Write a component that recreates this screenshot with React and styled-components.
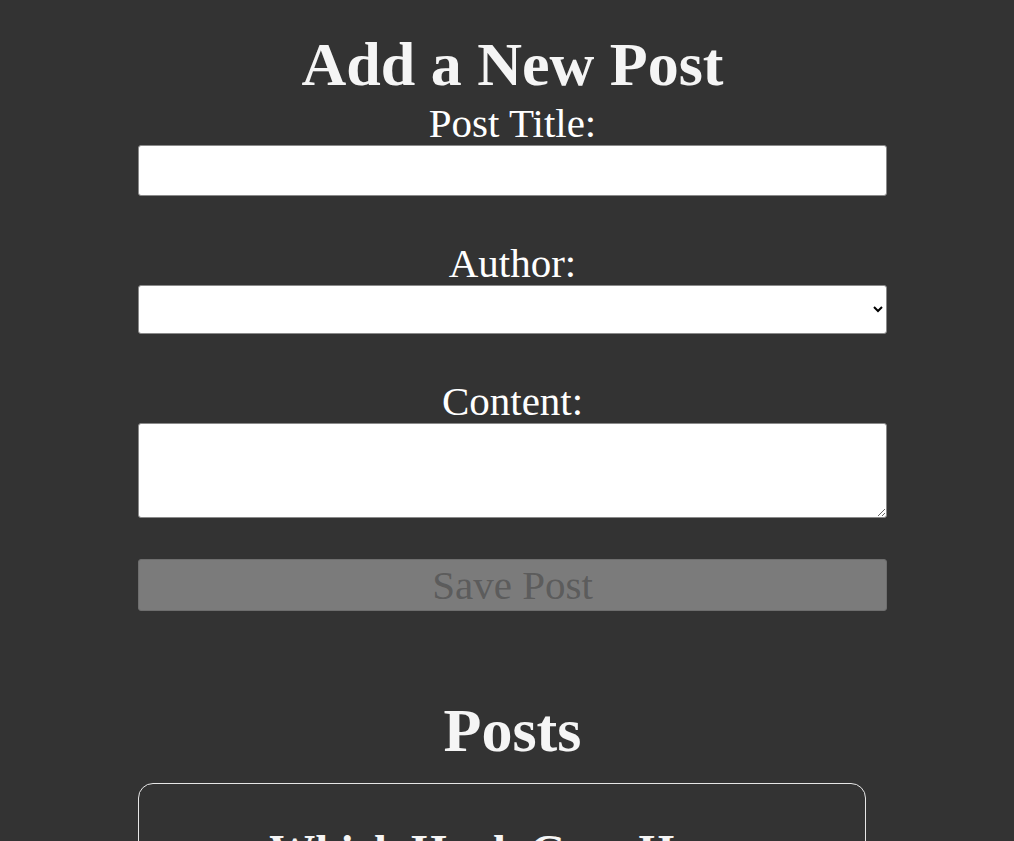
import React from "react";
import styled, { createGlobalStyle } from "styled-components";

const GlobalStyle = createGlobalStyle`
  html, body { margin: 0; padding: 0; background: #333333; }
  body {
    font-family: "Liberation Serif", "Times New Roman", serif;
    color: #f5f5f5;
  }
  * { box-sizing: border-box; }
`;

const Page = styled.main`
  display: flex;
  flex-direction: column;
  padding: 33px 127px 0 138px;
  min-height: 841px;
`;

const Section = styled.section`
  display: flex;
  flex-direction: column;
  align-items: ${(p) => (p.$start ? "flex-start" : "stretch")};
  margin-top: ${(p) => p.$mt || 0}px;
`;

const Heading = styled.h2`
  margin: 0;
  font-size: 62px;
  line-height: 62px;
  font-weight: 700;
  text-align: center;
  color: #f5f5f5;
  align-self: stretch;
`;

const Form = styled.form`
  display: flex;
  flex-direction: column;
  gap: 47px;
  margin-top: 8px;
`;

const Field = styled.div`
  display: flex;
  flex-direction: column;
  gap: 1px;
`;

const Label = styled.label`
  font-size: 41px;
  line-height: 41px;
  text-align: center;
  color: #ffffff;
`;

const controlBase = `
  width: 100%;
  background: #ffffff;
  border: 1px solid #8a8a8a;
  border-radius: 3px;
  font-family: "Liberation Serif", serif;
  font-size: 20px;
  margin: 0;
`;

const TextInput = styled.input`
  ${controlBase}
  height: 51px;
  padding: 0 8px;
`;

const Select = styled.select`
  ${controlBase}
  height: 49px;
  padding: 0 6px;
  color: #000;
`;

const TextArea = styled.textarea`
  ${controlBase}
  height: 95px;
  padding: 6px 8px;
  display: block;
`;

const SaveButton = styled.button`
  ${controlBase}
  height: 52px;
  margin-top: -6px;
  background: #7b7b7b;
  border: 1px solid #6e6e6e;
  color: #5c5c5c;
  font-size: 41px;
  line-height: 50px;
  padding: 0;
  cursor: default;
`;

const Card = styled.article`
  width: 728px;
  margin-top: 22px;
  border: 1px solid #e6e6e6;
  border-radius: 15px;
  padding: 23px 24px 24px;
`;

const CardTitle = styled.h3`
  margin: 22px 0 0;
  font-size: 46px;
  line-height: 46px;
  font-weight: 700;
  text-align: center;
  color: #f5f5f5;
`;

export default function App() {
  return (
    <>
      <GlobalStyle />
      <Page>
        <Section>
          <Heading as="h1">Add a New Post</Heading>
          <Form onSubmit={(e) => e.preventDefault()}>
            <Field>
              <Label htmlFor="postTitle">Post Title:</Label>
              <TextInput id="postTitle" type="text" />
            </Field>
            <Field>
              <Label htmlFor="postAuthor">Author:</Label>
              <Select id="postAuthor" defaultValue="">
                <option value=""></option>
                <option value="1">Neil Young</option>
                <option value="2">Kevin Smith</option>
              </Select>
            </Field>
            <Field>
              <Label htmlFor="postContent">Content:</Label>
              <TextArea id="postContent" />
            </Field>
            <SaveButton type="button" disabled>
              Save Post
            </SaveButton>
          </Form>
        </Section>
        <Section $mt={88} $start>
          <Heading>Posts</Heading>
          <Card>
            <CardTitle>Which Hook Goes Here</CardTitle>
          </Card>
        </Section>
      </Page>
    </>
  );
}
